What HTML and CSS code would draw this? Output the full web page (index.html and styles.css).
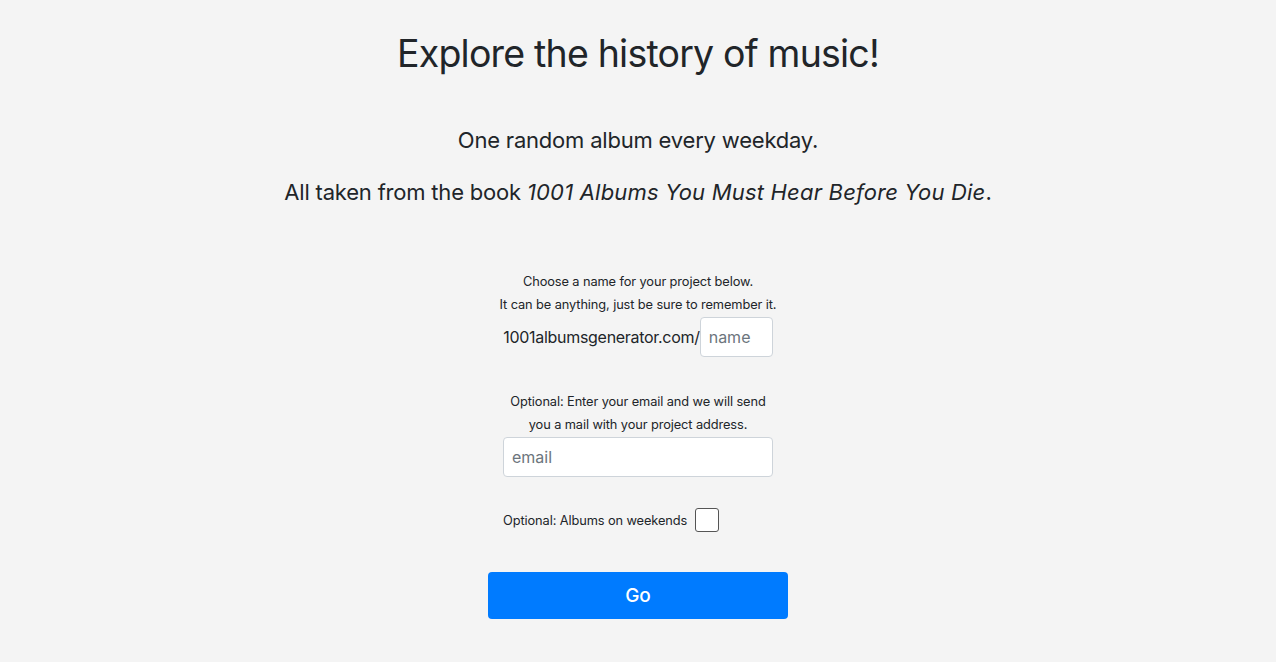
FILE: index.html
```html
<!DOCTYPE html>
<html lang="en">
<head>
    <meta charset="UTF-8">
    <title>1001 Albums Generator</title>
    <link rel="stylesheet" href="styles.css">
</head>
<body>
    <div class="container">
        <h1>Explore the history of music!</h1>
        <p class="lead first">One random album every weekday.</p>
        <p class="lead">All taken from the book <em>1001 Albums You Must Hear Before You Die</em>.</p>

        <form class="signup">
            <p class="hint">Choose a name for your project below.</p>
            <p class="hint">It can be anything, just be sure to remember it.</p>
            <div class="url-row">
                <span class="url">1001albumsgenerator.com/</span>
                <input type="text" class="field name-field" placeholder="name">
            </div>

            <p class="hint gap">Optional: Enter your email and we will send</p>
            <p class="hint">you a mail with your project address.</p>
            <input type="email" class="field email-field" placeholder="email">

            <label class="weekend">
                <span>Optional: Albums on weekends</span>
                <span class="box"></span>
            </label>

            <button type="button" class="go">Go</button>
        </form>
    </div>
</body>
</html>
```

FILE: styles.css
```css
:root {
    --bg: #f4f4f4;
    --text: #212529;
    --border: #ced4da;
    --primary: #007bff;
}
body {
    margin: 0;
    background: var(--bg);
    color: var(--text);
    font-family: 'Inter', 'Liberation Sans', sans-serif;
}
.container {
    display: flex;
    flex-direction: column;
    align-items: center;
    padding-top: 30px;
}
h1 {
    font-weight: 400;
    font-size: 37.5px;
    letter-spacing: -0.8px;
    margin: 0 0 47px;
    line-height: 48px;
}
.lead {
    font-size: 22px;
    letter-spacing: -0.2px;
    margin: 0 0 21px;
    line-height: 31px;
}
.lead em {
    letter-spacing: 0.2px;
}
.signup {
    display: flex;
    flex-direction: column;
    align-items: center;
    margin-top: 41px;
    width: 300px;
}
.hint {
    font-size: 12.8px;
    letter-spacing: -0.1px;
    margin: 0;
    line-height: 23px;
}
.hint.gap {
    margin-top: 33px;
}
.url-row {
    display: flex;
    align-items: center;
    margin-top: 1px;
}
.url {
    font-size: 16px;
    letter-spacing: -0.3px;
}
.field {
    height: 40px;
    box-sizing: border-box;
    border: 1px solid var(--border);
    border-radius: 4px;
    background: #fff;
    padding: 0 8px;
    font-family: inherit;
    font-size: 16px;
    color: var(--text);
}
.field::placeholder {
    color: #6c757d;
}
.name-field {
    width: 73px;
}
.email-field {
    width: 270px;
    margin-top: 1px;
}
.weekend {
    display: flex;
    align-items: center;
    align-self: flex-start;
    margin: 31px 0 0 15px;
    font-size: 12.8px;
    letter-spacing: -0.1px;
}
.box {
    width: 22px;
    height: 22px;
    border: 1px solid #555;
    border-radius: 3px;
    background: #fff;
    margin-left: 8px;
}
.go {
    width: 300px;
    height: 47px;
    margin-top: 40px;
    background: var(--primary);
    color: #fff;
    border: none;
    border-radius: 4px;
    font-family: inherit;
    font-size: 19px;
    font-weight: 500;
    cursor: pointer;
}
```
